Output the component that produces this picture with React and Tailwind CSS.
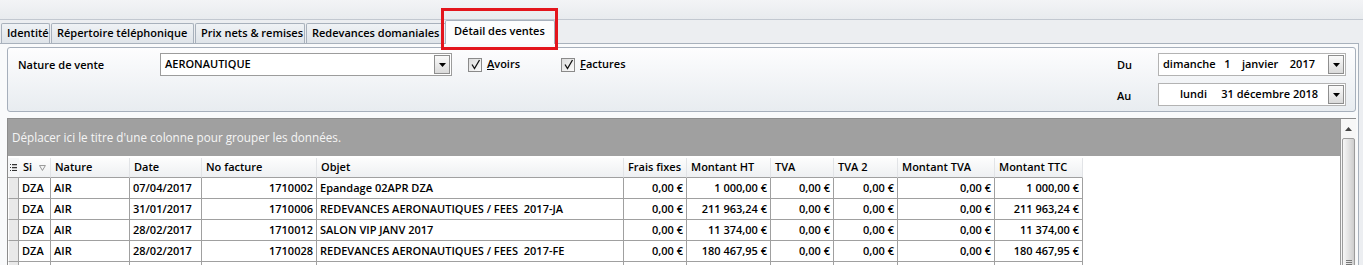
import React from "react";

const cols = [
  { label: "Si", w: "w-[32px]" },
  { label: "Nature", w: "w-[79px]" },
  { label: "Date", w: "w-[72px]" },
  { label: "No facture", w: "w-[115px]", right: true },
  { label: "Objet", w: "w-[307px]" },
  { label: "Frais fixes", w: "w-[63px]", right: true },
  { label: "Montant HT", w: "w-[84px]", right: true },
  { label: "TVA", w: "w-[63px]", right: true },
  { label: "TVA 2", w: "w-[64px]", right: true },
  { label: "Montant TVA", w: "w-[97px]", right: true },
  { label: "Montant TTC", w: "w-[88px]", right: true },
];

const rows = [
  ["DZA", "AIR", "07/04/2017", "1710002", "Epandage 02APR DZA", "0,00 €", "1 000,00 €", "0,00 €", "0,00 €", "0,00 €", "1 000,00 €"],
  ["DZA", "AIR", "31/01/2017", "1710006", "REDEVANCES AERONAUTIQUES / FEES  2017-JA", "0,00 €", "211 963,24 €", "0,00 €", "0,00 €", "0,00 €", "211 963,24 €"],
  ["DZA", "AIR", "28/02/2017", "1710012", "SALON VIP JANV 2017", "0,00 €", "11 374,00 €", "0,00 €", "0,00 €", "0,00 €", "11 374,00 €"],
  ["DZA", "AIR", "28/02/2017", "1710028", "REDEVANCES AERONAUTIQUES / FEES  2017-FE", "0,00 €", "180 467,95 €", "0,00 €", "0,00 €", "0,00 €", "180 467,95 €"],
  ["", "", "", "", "", "", "", "", "", "", ""],
];

const tabs = [
  { label: "Identité", w: "w-[49px]" },
  { label: "Répertoire téléphonique", w: "w-[143px]" },
  { label: "Prix nets & remises", w: "w-[110px]" },
  { label: "Redevances domaniales", w: "w-[141px]" },
];

const DropBtn = () => (
  <div className="w-[16px] h-full shrink-0 border border-[#8e8e8e] bg-gradient-to-b from-[#fafafa] to-[#dadada] flex items-center justify-center">
    <svg width="7" height="4" viewBox="0 0 7 4">
      <path d="M0 0H7L3.5 4Z" fill="#000" />
    </svg>
  </div>
);

const Check = () => (
  <span className="w-[14px] h-[14px] border border-[#8a8a8a] bg-gradient-to-br from-[#dcdcdc] to-[#fbfbfb] flex items-center justify-center">
    <svg width="11" height="11" viewBox="0 0 11 11">
      <path d="M2 5.5L4.5 9.5L9.5 1" fill="none" stroke="#111" strokeWidth="1.3" />
    </svg>
  </span>
);

const App = () => {
  return (
    <div className="relative w-[1363px] h-[265px] overflow-hidden bg-[#eceef1] text-black text-[11px] font-semibold font-['Open_Sans',sans-serif]">
      <div className="h-[20px] bg-gradient-to-b from-[#f3f4f6] to-[#e8ebee] border-b border-[#c2c8d0]" />

      <div className="relative z-10 flex items-end h-[23px] pl-[1px]">
        {tabs.map((t) => (
          <div
            key={t.label}
            className={`${t.w} h-[20px] shrink-0 overflow-hidden whitespace-nowrap mr-[1px] px-[5px] flex items-center border border-b-0 border-[#a8b1bc] rounded-t-[2px] bg-gradient-to-b from-[#eff2f5] to-[#dfe4e9]`}
          >
            {t.label}
          </div>
        ))}
        <div className="w-[110px] h-[24px] -mb-[1px] -ml-[3px] shrink-0 px-[8px] pb-[2px] flex items-center border border-b-0 border-[#a8b1bc] rounded-t-[2px] bg-[#fcfdfd]">
          Détail des ventes
        </div>
      </div>

      <div className="w-[1359px] h-[222px] border-t border-r border-[#a8b1bc] bg-[#f9fafb] pl-[7px] pt-[3px]">
        <div className="w-[1349px] h-[65px] border border-[#a6afbb] rounded-[3px] bg-gradient-to-b from-[#fdfdfe] to-[#e8ecf0] flex justify-between pt-[5px]">
          <div className="flex items-center h-[23px] pl-[10px]">
            <span className="w-[142px] pt-[2px]">Nature de vente</span>
            <div className="w-[292px] h-[23px] border border-[#9c9c9c] bg-white flex items-center p-[1px]">
              <span className="flex-1 pl-[3px]">AERONAUTIQUE</span>
              <DropBtn />
            </div>
            <div className="w-[93px] ml-[16px] flex items-center gap-[5px]">
              <Check />
              <span>
                <u>A</u>voirs
              </span>
            </div>
            <div className="flex items-center gap-[5px]">
              <Check />
              <span>
                <u>F</u>actures
              </span>
            </div>
          </div>

          <div className="flex flex-col gap-[7px] pr-[9px]">
            <div className="flex items-center h-[23px]">
              <span className="w-[41px] pt-[2px]">Du</span>
              <div className="w-[188px] h-[23px] border border-[#b3b3b3] bg-white flex items-center p-[1px]">
                <span className="flex-1 pl-[3px] whitespace-pre">
                  dimanche{"   "}1{"    "}janvier{"    "}2017
                </span>
                <DropBtn />
              </div>
            </div>
            <div className="flex items-center h-[23px]">
              <span className="w-[41px] pt-[3px]">Au</span>
              <div className="w-[188px] h-[23px] border border-[#b3b3b3] bg-white flex items-center p-[1px]">
                <span className="flex-1 pl-[20px] whitespace-pre">
                  lundi{"     "}31 décembre 2018
                </span>
                <DropBtn />
              </div>
            </div>
          </div>
        </div>

        <div className="mt-[6px] w-[1349px] h-[148px] flex border-t border-l border-[#8c8c8c]">
          <div className="w-[1332px] bg-white flex flex-col">
            <div className="h-[37px] shrink-0 bg-[#a0a0a0] flex items-center pl-[4px] font-normal text-[11.7px] text-[#f5f5f5]">
              Déplacer ici le titre d'une colonne pour grouper les données.
            </div>
            <div className="h-[2px] shrink-0" />

            <div className="flex h-[20px] shrink-0">
              <div className="w-[11px] shrink-0 flex items-center justify-center border-b border-[#a0a0a0] bg-[#f6f7f8]">
                <svg width="7" height="7" viewBox="0 0 7 7">
                  <rect x="0" y="0" width="1" height="1" fill="#333" />
                  <rect x="0" y="3" width="1" height="1" fill="#333" />
                  <rect x="0" y="6" width="1" height="1" fill="#333" />
                  <rect x="2" y="0" width="5" height="1" fill="#333" />
                  <rect x="2" y="3" width="5" height="1" fill="#333" />
                  <rect x="2" y="6" width="5" height="1" fill="#333" />
                  <rect x="2" y="1.5" width="5" height="0.6" fill="#888" />
                  <rect x="2" y="4.5" width="5" height="0.6" fill="#888" />
                </svg>
              </div>
              {cols.map((c) => (
                <div
                  key={c.label}
                  className={`${c.w} shrink-0 flex items-center gap-[7px] px-[4px] whitespace-nowrap overflow-hidden border-r border-b border-r-[#e2e4e7] border-b-[#a0a0a0] bg-gradient-to-b from-[#fdfdfd] to-[#eef0f2]`}
                >
                  {c.label}
                  {c.label === "Si" && (
                    <svg width="7" height="6" viewBox="0 0 7 6">
                      <path d="M0.5 0.5H6.5L3.5 5.5Z" fill="none" stroke="#8a8a8a" strokeWidth="0.9" />
                    </svg>
                  )}
                </div>
              ))}
            </div>

            {rows.map((r, i) => (
              <div key={i} className="flex h-[21px] shrink-0">
                <div className="w-[11px] shrink-0 border-r border-b border-[#a0a0a0] bg-[#e9e9e9] border-l-[1px] border-l-white" />
                {cols.map((c, j) => (
                  <div
                    key={c.label}
                    className={`${c.w} shrink-0 flex items-center px-[3px] whitespace-pre overflow-hidden border-r border-b border-[#a0a0a0] ${c.right ? "justify-end" : ""}`}
                  >
                    {r[j]}
                  </div>
                ))}
              </div>
            ))}
          </div>

          <div className="w-[16px] shrink-0 border-l border-[#9a9a9a] bg-[#f7f7f7] flex flex-col items-center">
            <div className="h-[19px] shrink-0 flex items-center justify-center">
              <svg width="7" height="4" viewBox="0 0 7 4">
                <path d="M0 4H7L3.5 0Z" fill="#444" />
              </svg>
            </div>
            <div className="w-[13px] h-[248px] shrink-0 border border-[#9c9c9c] rounded-[2px] bg-gradient-to-r from-[#f7f7f7] via-[#e3e3e3] to-[#cdcdcd] flex flex-col items-center justify-center gap-[1px]">
              <div className="w-[6px] h-[1px] bg-[#777]" />
              <div className="w-[6px] h-[1px] bg-[#777]" />
              <div className="w-[6px] h-[1px] bg-[#777]" />
            </div>
          </div>
        </div>
      </div>

      <div className="absolute left-[441px] top-[8px] w-[117px] h-[42px] border-[3px] border-[#e3151c] z-20" />
    </div>
  );
};

export default App;
